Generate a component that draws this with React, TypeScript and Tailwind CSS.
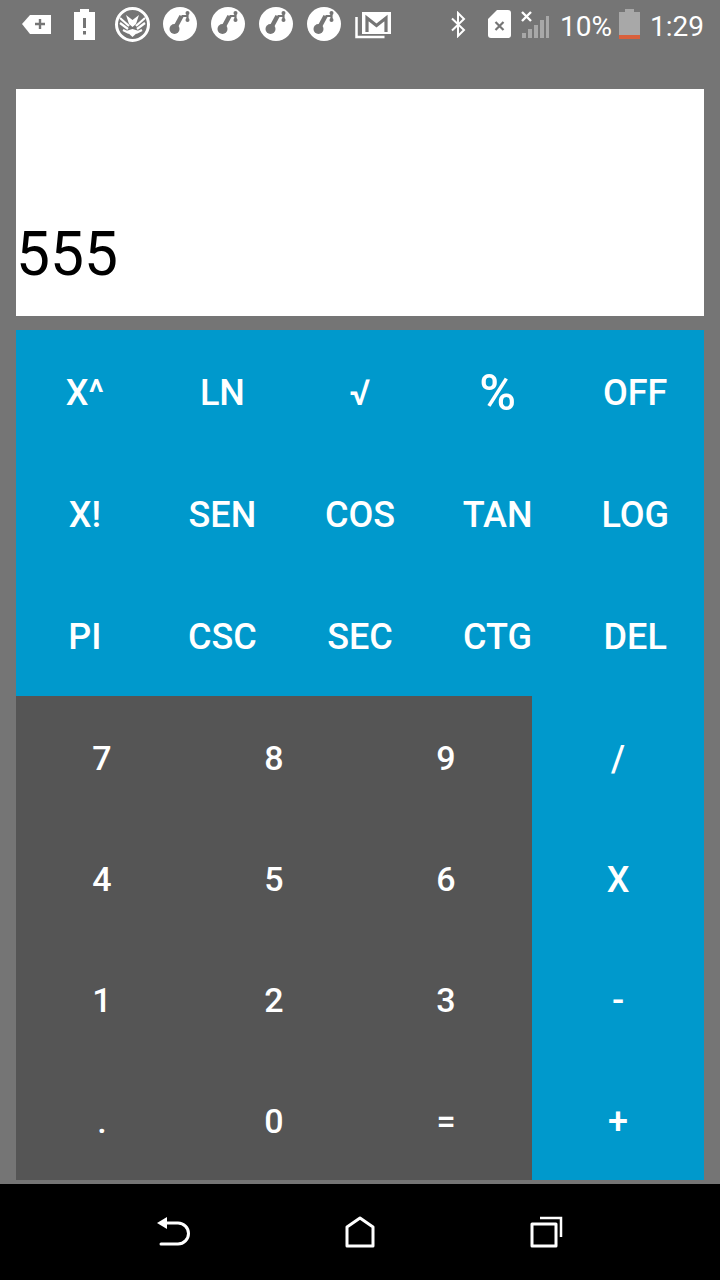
const fontFamily = "font-['Roboto',sans-serif]";

const topKeys = ['X^', 'LN', '√', '%', 'OFF', 'X!', 'SEN', 'COS', 'TAN', 'LOG', 'PI', 'CSC', 'SEC', 'CTG', 'DEL'];
const numberKeys = ['7', '8', '9', '4', '5', '6', '1', '2', '3', '.', '0', '='];
const opKeys = ['/', 'X', '-', '+'];

function AppIcon({ className }: { className: string }) {
  return (
    <svg className={className} width="34" height="34" viewBox="0 0 34 34" fill="none">
      <circle cx="17" cy="17" r="17" fill="#fff" />
      <circle cx="11.500" cy="22" r="5" fill="#757575" />
      <path d="M12 21L18.500 9" stroke="#757575" strokeWidth="4.500" />
      <path d="M18.500 9h6M24.500 6v7.500" stroke="#757575" strokeWidth="2.200" />
      <circle cx="24.500" cy="6" r="2" fill="#757575" />
      <circle cx="24.500" cy="13" r="2" fill="#757575" />
    </svg>
  );
}

function StatusBar() {
  return (
    <div className="flex h-[48px] items-center text-white">
      <svg className="ml-[22px]" width="29" height="22" viewBox="0 0 29 22">
        <path d="M0 11L8 2h21v19H8z" fill="#fff" />
        <path d="M18 6v10M13 11h10" stroke="#757575" strokeWidth="2.400" />
      </svg>
      <svg className="ml-[23px]" width="21" height="31" viewBox="0 0 21 31">
        <path d="M0 3h6V0h9v3h6v28H0z" fill="#fff" />
        <path d="M10.500 9v10M10.500 22v3.500" stroke="#757575" strokeWidth="3" />
      </svg>
      <svg className="ml-[20px]" width="35" height="35" viewBox="0 0 35 35" fill="none">
        <circle cx="17.500" cy="17.500" r="16" stroke="#fff" strokeWidth="3" />
        <path d="M5 11l9 8M30 11l-9 8M5 16l8 6M30 16l-8 6M8 23l6 3M27 23l-6 3" stroke="#fff" strokeWidth="2.200" />
        <path d="M11 8l6.500 5L24 8l-3 9-3.500 3-3.500-3z" fill="#fff" />
        <path d="M11 24l6.500 6 6.500-6-6.500-2z" fill="#fff" />
      </svg>
      <AppIcon className="ml-[13px]" />
      <AppIcon className="ml-[14px]" />
      <AppIcon className="ml-[14px]" />
      <AppIcon className="ml-[14px]" />
      <svg className="ml-[14px]" width="36" height="30" viewBox="0 0 36 30" fill="none">
        <path d="M1.500 8v20h28" stroke="#fff" strokeWidth="2.500" />
        <rect x="7" y="3" width="29" height="22" fill="#fff" />
        <path d="M12 23V9l9.500 7.500L31 9v14" stroke="#757575" strokeWidth="3.200" />
      </svg>
      <svg className="ml-[59px]" width="16" height="27" viewBox="0 0 16 27" fill="none">
        <path d="M2 7.500l12 11.500-6 6V2l6 6L2 19.500" stroke="#fff" strokeWidth="2" />
      </svg>
      <svg className="ml-[22px]" width="23" height="28" viewBox="0 0 23 28">
        <path d="M9 0h11a3 3 0 0 1 3 3v22a3 3 0 0 1-3 3H3a3 3 0 0 1-3-3V9z" fill="#fff" />
        <path d="M7.500 12l8 8M15.500 12l-8 8" stroke="#757575" strokeWidth="2.200" />
      </svg>
      <svg className="ml-[10px]" width="29" height="27" viewBox="0 0 29 27">
        <path d="M1 1l9 9M10 1L1 10" stroke="#fff" strokeWidth="2.400" />
        <path d="M1 22h4v5H1zM7 18h4v9H7zM13 14h4v13h-4zM19 9h4v18h-4zM25 5h3v22h-3z" fill="#a8a8a8" />
      </svg>
      <span className={`ml-[10px] mt-[5px] w-[53px] text-[28px] leading-none ${fontFamily}`}>10%</span>
      <svg className="ml-[6px]" width="21" height="30" viewBox="0 0 21 30">
        <path d="M0 3h6V0h9v3h6v27H0z" fill="#a8a8a8" />
        <rect x="0" y="26" width="21" height="4" fill="#d9603c" />
      </svg>
      <span className={`ml-[10px] mt-[5px] text-[28px] leading-none ${fontFamily}`}>1:29</span>
    </div>
  );
}

function Key({ label }: { label: string }) {
  const isDigit = numberKeys.includes(label);
  return (
    <button
      className={`flex items-center justify-center pt-[4px] font-medium text-white ${fontFamily} ${
        label === '%' ? 'text-[50px]' : isDigit ? 'text-[34px]' : 'text-[36px]'
      }`}
    >
      {label}
    </button>
  );
}

export default function App() {
  return (
    <div className="flex h-[1280px] w-[720px] flex-col bg-[#757575]">
      <StatusBar />
      <div className="flex flex-1 flex-col px-4 pt-[41px]">
        <div className={`flex h-[227px] items-end bg-white pb-[31px] text-[60.500px] leading-none text-black ${fontFamily}`}>
          555
        </div>
        <div className="mt-[14px] grid h-[366px] grid-cols-5 grid-rows-3 bg-[#0099cc]">
          {topKeys.map((key) => (
            <Key key={key} label={key} />
          ))}
        </div>
        <div className="flex h-[484px]">
          <div className="grid w-[516px] grid-cols-3 grid-rows-4 bg-[#555555]">
            {numberKeys.map((key) => (
              <Key key={key} label={key} />
            ))}
          </div>
          <div className="grid flex-1 grid-rows-4 bg-[#0099cc]">
            {opKeys.map((key) => (
              <Key key={key} label={key} />
            ))}
          </div>
        </div>
      </div>
      <div className="flex h-[96px] items-start bg-black pt-[32px]">
        <svg className="ml-[156px]" width="35" height="32" viewBox="0 0 35 32" fill="none">
          <path d="M1 7l10-6v12z" fill="#fff" />
          <path d="M9 7h13a10.500 10.500 0 0 1 0 21H5" stroke="#fff" strokeWidth="3" strokeLinecap="round" />
        </svg>
        <svg className="ml-[154px]" width="30" height="32" viewBox="0 0 30 32" fill="none">
          <path d="M2 30V11L15 2l13 9v19z" stroke="#fff" strokeWidth="3" strokeLinejoin="round" />
        </svg>
        <svg className="ml-[155px]" width="33" height="32" viewBox="0 0 33 32" fill="none">
          <rect x="2" y="8" width="24" height="22" stroke="#fff" strokeWidth="3" strokeLinejoin="round" />
          <path d="M10 2h21v19" stroke="#fff" strokeWidth="2.500" />
        </svg>
      </div>
    </div>
  );
}
